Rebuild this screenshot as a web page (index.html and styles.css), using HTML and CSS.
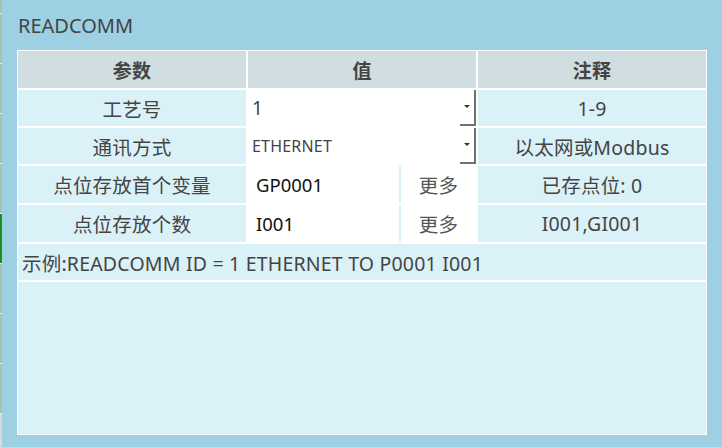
FILE: index.html
```html
<!DOCTYPE html>
<html>
<head>
<meta charset="utf-8">
<link rel="stylesheet" href="styles.css">
</head>
<body>
<div class="edge">
  <div class="seg s1"></div>
  <div class="seg"></div>
  <div class="seg"></div>
  <div class="seg"></div>
  <div class="seg"></div>
  <div class="seg green"></div>
  <div class="seg"></div>
  <div class="seg"></div>
  <div class="seg last"></div>
</div>
<div class="panel">
  <div class="title">READCOMM</div>
  <div class="grid">
    <div class="cell head">参数</div>
    <div class="cell head">值</div>
    <div class="cell head">注释</div>

    <div class="cell">工艺号</div>
    <div class="cell val">
      <div class="select"><span class="sel-text">1</span><span class="sel-btn"><span class="arrow"></span></span></div>
    </div>
    <div class="cell">1-9</div>

    <div class="cell">通讯方式</div>
    <div class="cell val">
      <div class="select"><span class="sel-text small">ETHERNET</span><span class="sel-btn"><span class="arrow"></span></span></div>
    </div>
    <div class="cell">以太网或Modbus</div>

    <div class="cell">点位存放首个变量</div>
    <div class="cell val split">
      <div class="input">GP0001</div>
      <div class="more">更多</div>
    </div>
    <div class="cell">已存点位: 0</div>

    <div class="cell">点位存放个数</div>
    <div class="cell val split">
      <div class="input">I001</div>
      <div class="more">更多</div>
    </div>
    <div class="cell">I001,GI001</div>

    <div class="cell example">示例:READCOMM ID = 1 ETHERNET TO P0001 I001</div>
    <div class="cell empty"></div>
  </div>
</div>
</body>
</html>
```
FILE: styles.css
```css
html, body {
  margin: 0;
  padding: 0;
}
body {
  width: 722px;
  height: 447px;
  display: flex;
  overflow: hidden;
  font-family: "Noto Sans", "Noto Sans CJK SC", sans-serif;
  color: #444;
}
.edge {
  width: 2px;
  display: flex;
  flex-direction: column;
  background: #d3dcd8;
}
.seg {
  height: 49px;
  border-top: 1px solid #e4ebe6;
  background: #a9c2ad;
}
.seg.s1 {
  height: 13px;
  border-top: none;
}
.seg.green {
  background: #1f8f1f;
}
.seg.last {
  height: 49px;
  border-bottom: 1px solid #e4ebe6;
}
.panel {
  flex: 1;
  background: #9dd0e2;
  padding: 0 0 0 15px;
}
.title {
  font-size: 20px;
  height: 50px;
  line-height: 26px;
  padding-top: 13px;
  box-sizing: border-box;
  padding-left: 1px;
  color: #444;
}
.grid {
  width: 690px;
  box-sizing: border-box;
  background: #ffffff;
  padding: 1px;
  display: grid;
  grid-template-columns: 228px 228px 228px;
  grid-template-rows: 37px 36px 36px 37px 37px 36px 152px;
  gap: 2px;
}
.cell {
  background: #daf1f7;
  display: flex;
  align-items: center;
  justify-content: center;
  font-size: 19.5px;
  letter-spacing: 0.2px;
  white-space: nowrap;
}
.head {
  background: #d0dde1;
  font-weight: bold;
  font-size: 19px;
}
.val {
  background: #ffffff;
  justify-content: flex-start;
  align-items: stretch;
}
.select {
  flex: 1;
  display: flex;
  align-items: center;
  background: #fff;
}
.sel-text {
  flex: 1;
  padding-left: 4px;
  font-size: 19px;
  letter-spacing: 0;
}
.sel-text.small {
  font-size: 16px;
  letter-spacing: 0.2px;
}
.sel-btn {
  width: 14px;
  align-self: stretch;
  border-right: 2px solid #707070;
  border-bottom: 2px solid #707070;
  display: flex;
  align-items: center;
  justify-content: center;
}
.arrow {
  width: 0;
  height: 0;
  border-left: 3px solid transparent;
  border-right: 3px solid transparent;
  border-top: 3px solid #333;
  margin-bottom: 2px;
}
.split {
  background: #daf1f7;
  gap: 2px;
}
.input {
  width: 151px;
  background: #fff;
  display: flex;
  align-items: center;
  padding-left: 8px;
  box-sizing: border-box;
  color: #111;
  font-size: 18.5px;
  letter-spacing: 0;
}
.more {
  flex: 1;
  background: #fff;
  display: flex;
  align-items: center;
  justify-content: center;
  color: #555;
}
.example {
  grid-column: 1 / 4;
  justify-content: flex-start;
  padding-left: 4px;
}
.empty {
  grid-column: 1 / 4;
}
```
